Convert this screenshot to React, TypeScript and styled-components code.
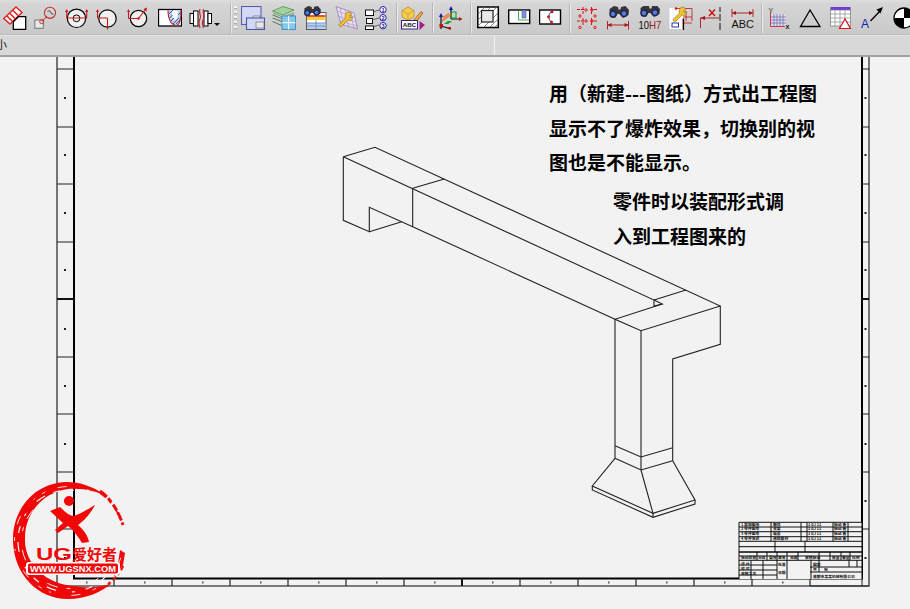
import React from 'react';
import styled, { createGlobalStyle } from 'styled-components';

const GlobalStyle = createGlobalStyle`
  html, body {
    margin: 0;
    padding: 0;
    width: 100%;
    height: 100%;
    overflow: hidden;
    background: #f2f2f2;
    font-family: "Liberation Sans", "Noto Sans CJK SC", sans-serif;
  }
`;

const Page = styled.div`
  display: flex;
  flex-direction: column;
  width: 910px;
  height: 609px;
  overflow: hidden;
`;

const Toolbar = styled.div`
  display: flex;
  align-items: center;
  flex: none;
  height: 35px;
  padding: 1px 0 0 3px;
  box-sizing: border-box;
  overflow: hidden;
  background: linear-gradient(#dedede 0, #d6d6d6 10%, #c9c9c9 100%);
  border-bottom: 1px solid #bcbcbc;
`;

const ToolGroup = styled.div`
  display: flex;
  flex: none;
  align-items: center;
  gap: 7px;
`;

const Tool = styled.svg`
  display: block;
  flex: none;
  width: 24px;
  height: 24px;
  overflow: hidden;
`;

const DropArrow = styled.div`
  flex: none;
  width: 0;
  height: 0;
  margin: 13px 0 0 1px;
  border-left: 3px solid transparent;
  border-right: 3px solid transparent;
  border-top: 3px solid #111;
`;

const Separator = styled.div<{ $before: number; $after: number }>`
  flex: none;
  width: 2px;
  height: 30px;
  margin-left: ${p => p.$before}px;
  margin-right: ${p => p.$after}px;
  background: #ececec;
  border-left: 1px solid #b4b4b4;
  box-sizing: border-box;
`;

const Grip = styled.div`
  flex: none;
  width: 3px;
  height: 24px;
  margin: 0 4px 0 2px;
  background: repeating-linear-gradient(#f4f4f4 0 2px, #a8a8a8 2px 3px, transparent 3px 5px);
`;

const StatusRow = styled.div`
  display: flex;
  flex: none;
  height: 22px;
  box-sizing: border-box;
  overflow: hidden;
  background: #d8d8d8;
  border-top: 1px solid #e4e4e4;
  border-bottom: 2px solid #a2a2a2;
`;

const StatusCell = styled.div`
  flex: none;
  width: 495px;
  box-sizing: border-box;
  overflow: hidden;
  border-right: 1px solid #f0f0f0;
  font-size: 11px;
  line-height: 16px;
  color: #111;
`;

const ClippedLabel = styled.span`
  display: block;
  margin-left: -4px;
  font-family: "Noto Sans CJK SC", sans-serif;
`;

const Canvas = styled.div`
  position: relative;
  flex: 1;
  background: #f2f2f2;
  overflow: hidden;
`;

const Sheet = styled.svg`
  display: block;
  width: 910px;
  height: 552px;
`;

const Note = styled.div<{ $left: number; $top: number }>`
  position: absolute;
  left: ${p => p.$left}px;
  top: ${p => p.$top}px;
  font-family: "Noto Sans CJK SC", sans-serif;
  font-size: 19px;
  font-weight: 700;
  line-height: 34.5px;
  color: #000;
  white-space: nowrap;
`;

const Logo = styled.svg`
  position: absolute;
  left: 8px;
  top: 423px;
  width: 124px;
  height: 124px;
`;

const Binoculars = ({ x = 0, y = 0 }: { x?: number; y?: number }) => (
  <g transform={`translate(${x} ${y})`}>
    <path d="M1.5 3 L6 0 L10 1 L10.5 3.5 L12.5 3.5 L13 1 L17.5 0 L21 4 L20.5 9 L15 12 L11.5 8 L9.5 8 L7 12 L2 11 Z" fill="#36363c" />
    <circle cx="5" cy="8" r="3.7" fill="#1e2850" />
    <circle cx="16" cy="7.5" r="3.7" fill="#1e2850" />
    <circle cx="5" cy="8" r="2.2" fill="#5c78d8" />
    <circle cx="16" cy="7.5" r="2.2" fill="#5c78d8" />
  </g>
);

const Wrench = ({ x = 0, y = 0 }: { x?: number; y?: number }) => (
  <path
    transform={`translate(${x} ${y})`}
    d="M10 0.5 C13 -0.5 15 1 14.5 3 L12.5 3.8 L13 5.5 L15.5 5 C16 8 13 9 11 8 L5 14 C3.5 15.5 1 13.5 2.5 12 L8.5 6 C7.5 3.5 8.5 1.5 10 0.5 Z"
    fill="#f2c230"
    stroke="#8f6a10"
    strokeWidth="0.6"
  />
);

const RED = '#d01818';
const DIM = '#a81414';

const toolsA = [
  <g key="a">
    <path d="M0.8 12.5 L13 1 L19 6.5 L7 18 Z" fill="#fff" stroke="#e02020" strokeWidth="1.4" />
    <path d="M4 10 L9 15 M7 7.5 L12 12.5 M10 4.5 L15 9.5" stroke="#e02020" strokeWidth="1.6" />
    <path d="M10.3 23.3 V15.7 L15.3 10.7 H22.7 V23.3 Z" fill="#fff" stroke="#000" strokeWidth="1.3" />
  </g>,
  <g key="b">
    <rect x="0.8" y="14" width="8.5" height="8.3" fill="#e8e8e8" stroke="#777" strokeWidth="1" />
    <path d="M8 15.5 L13 10" stroke="#c03030" strokeWidth="1" />
    <circle cx="7.7" cy="15.7" r="2" fill="none" stroke="#c03030" strokeWidth="1" />
    <circle cx="16" cy="6.8" r="5.6" fill="none" stroke="#c83030" strokeWidth="1.1" />
    <path d="M13.5 6 Q15.5 3.5 16.5 6 T19.5 8" fill="none" stroke="#666" strokeWidth="1.1" />
  </g>,
  <g key="c">
    <circle cx="11.5" cy="12.3" r="9.2" fill="#f0f0f0" stroke="#000" strokeWidth="1.2" />
    <circle cx="11.5" cy="12.3" r="3.4" fill="none" stroke="#000" strokeWidth="1" />
    <path d="M1.7 12 H21.7 M1.7 12 V4 M21.7 12 V4" stroke={RED} strokeWidth="1.1" />
    <path d="M1.7 3 L0 6 H3.4 Z M21.7 3 L20 6 H23.4 Z" fill={RED} />
  </g>,
  <g key="d">
    <circle cx="11.5" cy="12.5" r="8.7" fill="#f0f0f0" stroke="#000" strokeWidth="1.2" />
    <path d="M1.5 12 H11.5 M1.5 12 V4" stroke={RED} strokeWidth="1.1" />
    <path d="M11.5 12 V23.5" stroke={RED} strokeWidth="1.1" />
    <path d="M1.5 3 L0 6 H3 Z" fill={RED} />
  </g>,
  <g key="e">
    <circle cx="11.5" cy="12.5" r="8.2" fill="#f0f0f0" stroke="#000" strokeWidth="1.2" />
    <path d="M1.5 12.5 H11.5 M1.5 12.5 V4 M11.5 12.5 L18.5 3.5" stroke={RED} strokeWidth="1.1" />
    <path d="M1.5 3 L0 6 H3 Z M20 1.5 L16.5 3 L19.5 5.5 Z" fill={RED} />
    <circle cx="11.5" cy="12.5" r="1.2" fill={RED} />
  </g>,
  <g key="f">
    <rect x="0.5" y="3.5" width="23" height="16.5" fill="#fff" stroke="#000" strokeWidth="1.3" />
    <path d="M10 4 C10 16 15 19.5 18 19.5 C21 19.5 23 14 23 4 H20 C20 10 19 14 17 14 C15 14 14 10 14 4 Z" fill="#bcd0ea" />
    <path d="M11 8 L15 4 M11.5 12 L14.5 9 M13 15 L16 12 M15 18 L21 12 M18 18 L22.5 13.5 M20 9 L23 6" stroke="#2050a8" strokeWidth="0.9" />
    <path d="M10 4 C10 16 15 19.5 18 19.5 C21 19.5 23 14 23 4" fill="none" stroke="#c02030" strokeWidth="1.1" />
  </g>,
  <g key="g">
    <rect x="1" y="7.5" width="3.5" height="10" fill="#fff" stroke="#000" strokeWidth="1" />
    <rect x="4.5" y="5" width="4.5" height="15" fill="#fff" stroke="#000" strokeWidth="1" />
    <rect x="15" y="5" width="4" height="15" fill="#fff" stroke="#000" strokeWidth="1" />
    <rect x="19" y="7.5" width="3.5" height="10" fill="#fff" stroke="#000" strokeWidth="1" />
    <path d="M11 3 C9 7 13 10 11 13 S10 19 11 22 M14.5 3 C12.5 7 16.5 10 14.5 13 S13.5 19 14.5 22" fill="none" stroke="#c02028" strokeWidth="1.1" />
  </g>
];

const toolsB = [
  <g key="h">
    <rect x="0.5" y="0.5" width="19.5" height="18" fill="#d4d8f4" stroke="#5560b0" strokeWidth="1.1" />
    <rect x="12" y="10" width="7" height="5" fill="#e8e8e8" stroke="#606060" strokeWidth="0.6" />
    <rect x="5.5" y="12" width="18" height="11.5" fill="#d4d8f4" stroke="#4a56a8" strokeWidth="1.1" />
    <rect x="15" y="16" width="8" height="6" fill="#e8e8e8" stroke="#606060" strokeWidth="0.6" />
  </g>,
  <g key="i">
    <path d="M0.5 5 L11 0.5 L22 4 L11 9 Z" fill="#9fd49f" stroke="#507a50" strokeWidth="0.7" />
    <path d="M0.5 9 L11 13 L22 9 M0.5 12 L11 16 M0.5 15.5 L11 20" fill="none" stroke="#4a6a4a" strokeWidth="0.9" />
    <path d="M1 7 L11 11 L22 7" fill="none" stroke="#70b070" strokeWidth="1.3" />
    <rect x="10" y="10" width="13.5" height="13.5" fill="#88c8ea" stroke="#3a8cc0" strokeWidth="0.9" />
    <path d="M16.7 10 V23.5 M10 16.7 H23.5" stroke="#fff" strokeWidth="1" />
  </g>,
  <g key="j">
    <rect x="3.5" y="6.5" width="19.5" height="17" fill="#fff" stroke="#5a5a5a" strokeWidth="1" />
    <rect x="4" y="11" width="18.5" height="3" fill="#f4d030" />
    <rect x="4" y="9" width="18.5" height="2" fill="#e05050" />
    <rect x="4" y="17" width="18.5" height="6" fill="#b8d0f0" />
    <path d="M4 17 H23 M4 20 H23 M13 14 V23.5" stroke="#5878b0" strokeWidth="0.7" />
    <g transform="scale(0.85)">
      <Binoculars />
    </g>
  </g>,
  <g key="k">
    <path d="M2 0.5 L20 7 L23.5 23 L7 18 Z" fill="#e6e0ee" stroke="#9878b8" strokeWidth="0.8" />
    <path d="M6 2 L10 20 M11 4 L15 21 M16 5.5 L20 22 M3 5 L21 11 M4 10 L22 16 M5.5 15 L23 20" stroke="#a88cc8" strokeWidth="0.6" />
    <Wrench x={3} y={6} />
  </g>,
  <g key="l">
    <rect x="0.5" y="4" width="8" height="5.5" fill="#fff" stroke="#111" strokeWidth="1" />
    <rect x="1.5" y="12.5" width="6" height="5" fill="#fff" stroke="#111" strokeWidth="1" />
    <rect x="0.5" y="20" width="8" height="3.5" fill="#fff" stroke="#111" strokeWidth="1" />
    <path d="M8 6 L14 4 M7 14 L14 12 M8 21 L14 19" stroke="#444" strokeWidth="0.8" />
    <circle cx="18" cy="3.7" r="3.2" fill="#fff" stroke="#2020a0" strokeWidth="1" />
    <circle cx="18" cy="11.7" r="3.2" fill="#fff" stroke="#2020a0" strokeWidth="1" />
    <circle cx="18" cy="19.7" r="3.2" fill="#fff" stroke="#2020a0" strokeWidth="1" />
    <text x="18" y="5.7" fontSize="5.5" fontWeight="700" textAnchor="middle" fill="#2020a0">1</text>
    <text x="18" y="13.7" fontSize="5.5" fontWeight="700" textAnchor="middle" fill="#2020a0">2</text>
    <text x="18" y="21.7" fontSize="5.5" fontWeight="700" textAnchor="middle" fill="#2020a0">3</text>
  </g>
];

const toolCube = (
  <g>
    <path d="M1 4.5 L7 1 L13 4.5 V11 L7 14 L1 11 Z" fill="#f6cc50" stroke="#b88a18" strokeWidth="0.7" />
    <path d="M1 4.5 L7 8 L13 4.5 M7 8 V14" fill="none" stroke="#c89a28" strokeWidth="0.7" />
    <path d="M13 14 L20 5.5 L22 7 L15.5 15.5 Z" fill="#f0b030" stroke="#8a3010" strokeWidth="0.6" />
    <rect x="0.5" y="14.5" width="16" height="8.5" fill="#fff" stroke="#302090" strokeWidth="1" />
    <text x="8.5" y="21" fontSize="6.2" fontWeight="700" textAnchor="middle" fill="#111">ABC</text>
    <path d="M18.5 15 L24 19 L18.5 24 Z" fill="#a81890" />
  </g>
);

const toolAxes = (
  <g>
    <path d="M12 13 V2 M12 13 H22" stroke="#111" strokeWidth="1.2" />
    <path d="M12 0 L10 4 H14 Z" fill="#1010c0" />
    <path d="M23.5 13 L20 11 V15 Z" fill="#c01010" />
    <rect x="12" y="6" width="5" height="6" fill="none" stroke="#10a030" strokeWidth="1.1" />
    <path d="M2 23 V9 M2 20 L12 23" stroke="#111" strokeWidth="1.2" />
    <path d="M2 7 L0 11 H4 Z" fill="#1010c0" />
    <rect x="0.5" y="18" width="3.5" height="3.5" fill="#c01010" />
    <path d="M11 24 L7.5 21 L12 21 Z" fill="#c01010" />
    <path d="M5 18 L9 15 H13 L9 18 Z" fill="#10a030" />
    <path d="M3 15 L12 8.5 M4 12 L10 7.5" stroke="#f07020" strokeWidth="1.4" />
  </g>
);

const toolsC = [
  <g key="m">
    <rect x="0.8" y="1" width="20.5" height="20.5" fill="#fff" stroke="#000" strokeWidth="1.5" />
    <path d="M1 8 L8 1 M1 14 L14 1 M1 20 L20 1 M7 21 L21 7 M13 21 L21 13 M18 21 L21 18" stroke="#666" strokeWidth="0.8" />
    <rect x="4.5" y="4.5" width="11.5" height="11.5" fill="#e8e8e8" stroke="#222" strokeWidth="1.2" />
  </g>,
  <g key="n">
    <rect x="0.7" y="4" width="21" height="13.5" fill="#fff" stroke="#000" strokeWidth="1.4" />
    <path d="M10.5 4.5 V14 H21" fill="none" stroke="#40b040" strokeWidth="1" />
    <rect x="14" y="4.5" width="4" height="7.5" fill="#8090d8" stroke="#5060a8" strokeWidth="0.6" />
  </g>,
  <g key="o">
    <rect x="0.5" y="4" width="21" height="14" fill="#fff" stroke="#000" strokeWidth="1.4" />
    <path d="M14 4.5 C8.5 7 8.5 14.5 14 17.5" fill="none" stroke="#3050c0" strokeWidth="1" />
    <circle cx="13" cy="5.7" r="1.5" fill={RED} />
    <circle cx="9.5" cy="10.8" r="1.5" fill={RED} />
    <circle cx="12.5" cy="16" r="1.5" fill={RED} />
  </g>
];

const toolsD = [
  <g key="p">
    <path d="M1 3.5 H9 M7 1 V9 M14 3.5 H22 M15.5 1 V9 M1 15 H9 M7 12 V20 M14 15 H22 M15.5 12 V20" stroke="#d01010" strokeWidth="1" strokeDasharray="3 1" />
    {[[4, 10], [10, 4], [19, 10], [10, 15], [4, 21.5], [19, 21.5], [16, 4], [16, 15]].map(([cx, cy]) => (
      <circle key={`${cx}-${cy}`} cx={cx} cy={cy} r="1.2" fill="none" stroke="#e81818" strokeWidth="1" />
    ))}
  </g>,
  <g key="q">
    <Binoculars x={1} y={0} />
    <path d="M0.5 19 H21.5 M0.5 15 V23.5 M21.5 15 V23.5" stroke={DIM} strokeWidth="0.9" />
    <path d="M0.5 19 L4.5 17 V21 Z M21.5 19 L17.5 17 V21 Z" fill={DIM} />
  </g>,
  <g key="r">
    <Binoculars x={1} y={-1} />
    <text x="0.5" y="23" fontSize="11.5" fill="#111" textLength="10.5" lengthAdjust="spacingAndGlyphs">10</text>
    <text x="11" y="23" fontSize="11.5" fill="#a01818" textLength="12.5" lengthAdjust="spacingAndGlyphs">H7</text>
  </g>,
  <g key="s">
    <rect x="0.5" y="2" width="14" height="21" fill="#fff" />
    <path d="M6 2.5 H23 V15 M14 23 V12 M14 17 H23 M17 5 V15 M14 11 H23" fill="none" stroke="#c01818" strokeWidth="0.8" />
    <circle cx="7" cy="2.5" r="1.3" fill="#e01010" />
    <Wrench x={2} y={1} />
    <path d="M14.5 13 V24" stroke="#000" strokeWidth="1.2" />
    <rect x="3" y="17" width="6.5" height="4" fill="#fff" stroke="#1020a0" strokeWidth="0.9" />
  </g>,
  <g key="t">
    <path d="M0.5 12 V22 M0.5 12 H19" stroke={DIM} strokeWidth="0.9" />
    <path d="M0.5 12 L5 10 V14 Z" fill={DIM} />
    <path d="M20 1 V6 M20 8 V15 M20 17 V24" stroke="#111" strokeWidth="1" />
    <path d="M9 3.5 L15 10 M15 3.5 L9 10" stroke="#c01010" strokeWidth="1.4" />
  </g>,
  <g key="u">
    <path d="M1 7 H22 M1 3 V11 M22 3 V11" stroke={DIM} strokeWidth="0.9" />
    <path d="M1 7 L5 5 V9 Z M22 7 L18 5 V9 Z" fill={DIM} />
    <text x="0.5" y="22" fontSize="11" textLength="22.5" lengthAdjust="spacingAndGlyphs" fill="#111">ABC</text>
  </g>
];

const toolsE = [
  <g key="v">
    <text x="0.5" y="6.5" fontSize="7" fill="#333">Y</text>
    <rect x="3" y="8" width="15" height="12" fill="#dcdcec" />
    <path d="M3 11 H18 M3 14 H18 M3 17 H18 M6 8 V20 M9 8 V20 M12 8 V20 M15 8 V20" stroke="#6868a0" strokeWidth="0.7" />
    <path d="M2.5 6 V20.5 H17" fill="none" stroke="#d03048" strokeWidth="1" />
    <text x="17.5" y="22.5" fontSize="7" fontWeight="700" fill="#222">x</text>
  </g>,
  <path key="w" d="M11 4 L1.5 20.5 H21 Z" fill="none" stroke="#000" strokeWidth="1.3" />,
  <g key="x">
    <rect x="0.5" y="1" width="20" height="3" fill="#7038d8" />
    <rect x="0.5" y="4" width="20" height="16" fill="#fff" stroke="#777" strokeWidth="0.7" />
    <path d="M0.5 8 H20.5 M0.5 12 H20.5 M0.5 16 H20.5 M5 4 V20 M10 4 V20 M15 4 V20" stroke="#8a8a8a" strokeWidth="0.7" />
    <path d="M15 13 L9.5 22.5 H20.5 Z" fill="#fff" stroke="#d01020" strokeWidth="1.2" />
  </g>,
  <g key="y">
    <text x="0" y="21.5" fontSize="12" fill="#1420b0">A</text>
    <path d="M9.5 15 L19 5" stroke="#000" strokeWidth="1.3" />
    <path d="M22 1 L15.5 3.5 L19.5 7.5 Z" fill="#000" />
  </g>,
  <g key="z">
    <circle cx="12" cy="12" r="10" fill="#fff" stroke="#000" strokeWidth="1.3" />
    <path d="M12 2 A10 10 0 0 1 22 12 H12 Z M12 22 A10 10 0 0 1 2 12 H12 Z" fill="#000" />
  </g>
];

const renderTools = (tools: React.ReactNode[]) =>
  tools.map((t, i) => (
    <Tool key={i} viewBox="0 0 24 24">
      {t}
    </Tool>
  ));

// ruler ticks repeat every 57.7px down the sheet and 58px along it
const rulerRows = [69, 127, 184, 242, 299, 357, 414, 472, 529];
const rulerDots = [97, 154, 212, 269, 328, 385, 443, 500, 557];
const rulerCols = [114, 172, 230, 288, 346, 404, 462, 520, 578, 636, 694, 752, 810];

// model outline in screen coordinates
const modelLines = [
  'M343.3 156.7 L375 147.3 L720.3 306 V344.3 L672.7 359 V460.7',
  'M343.3 156.7 L654 300 V306 L662.3 304 L654 300',
  'M654 300 L686 290',
  'M412.7 188.3 L444.3 179',
  'M412.7 188.3 V226.7',
  'M343.3 156.7 V220.3 L369.3 231.7 V207.3 L412.7 226.7 L615 319.3',
  'M369.3 231.7 L401.7 221.7',
  'M662.3 304 L615 319.3 L641 330.7 L720.3 306',
  'M615 319.3 V458.3',
  'M641 330.7 V470',
  'M615 445.7 L641 457 L672.7 447.7',
  'M615 458.3 L641 470 L672.7 460.7',
  'M615 458.3 L592.3 486 L653 513.3 L695 500 L672.7 460.7',
  'M641 470 L653 513.3',
  'M592.3 486 V490 L653 517.3 L695 504 V500',
  'M653 513.3 V517.3'
];

const blockH = [
  [739, 862, 522.3], [739, 862, 527], [739, 862, 531.7], [739, 862, 536.7], [739, 862, 541.3],
  [739, 862, 552], [739, 862, 556], [739, 862, 560.3], [739, 777, 565], [739, 777, 570], [739, 777, 575],
  [810, 862, 567], [810, 862, 572]
];
const blockV = [
  [739, 522.3, 579], [771, 522.3, 541.3], [801, 522.3, 541.3], [807, 522.3, 541.3], [833, 522.3, 541.3],
  [848, 522.3, 541.3], [775, 541.3, 552], [805, 541.3, 552], [757, 552, 560.3], [767, 552, 560.3],
  [777, 552, 579], [787, 552, 560.3], [798, 552, 560.3], [819, 552, 560.3], [830, 552, 560.3],
  [841, 552, 560.3], [850, 552, 560.3], [751, 560.3, 579], [763, 560.3, 579], [787, 560.3, 579],
  [811, 560.3, 579], [819, 560.3, 572], [849, 560.3, 567], [857, 560.3, 567], [862, 522.3, 579]
];
const blockLabels = [
  [741, 525.8, '1 装配图纸'], [741, 530.4, '2 零件图号'], [741, 535.2, '3 零件图号'], [741, 540, '4 零件名称'],
  [773, 525.8, '箱体'], [773, 530.4, '支架'], [773, 535.2, '端盖'], [773, 540, '连接板材'],
  [808, 525.8, '1 GJ 11'], [808, 530.4, '1 GJ 11'], [808, 535.2, '1 GJ 11'], [808, 540, '1 GJ 11'],
  [834, 525.8, '标记 备'], [834, 530.4, '标记 备'], [834, 535.2, '标记 备'], [834, 540, '标记 备'],
  [741, 559, '标记处数'], [758, 559, '分区'], [769, 559, '更改'], [778, 559, '签名'], [790, 559, '日期'],
  [805, 559, '审核标记'], [832, 559, '数量'], [842, 559, '重量'], [852, 559, '比例'],
  [741, 564.5, '设 计'], [741, 569.5, '校 对'], [741, 574.8, '审核工艺'], [778, 566, '批准'], [778, 574, '日期'],
  [813, 565.5, '图样'], [813, 570.8, '共'], [824, 570.8, '张'], [813, 577.5, '成都市某某机械有限公司']
];

export default function App() {
  return (
    <>
      <GlobalStyle />
      <Page>
        <Toolbar>
          <ToolGroup>{renderTools(toolsA)}</ToolGroup>
          <DropArrow />
          <Separator $before={10} $after={0} />
          <Grip />
          <ToolGroup>{renderTools(toolsB)}</ToolGroup>
          <Separator $before={7} $after={3} />
          <ToolGroup>{renderTools([toolCube])}</ToolGroup>
          <Separator $before={7} $after={5} />
          <ToolGroup>{renderTools([toolAxes])}</ToolGroup>
          <Separator $before={7} $after={5} />
          <ToolGroup>{renderTools(toolsC)}</ToolGroup>
          <Separator $before={6} $after={5} />
          <ToolGroup>{renderTools(toolsD)}</ToolGroup>
          <Separator $before={6} $after={5} />
          <ToolGroup>{renderTools(toolsE)}</ToolGroup>
        </Toolbar>
        <StatusRow>
          <StatusCell>
            <ClippedLabel>小</ClippedLabel>
          </StatusCell>
        </StatusRow>
        <Canvas>
          <Sheet viewBox="0 57 910 552">
            <g fill="none">
              <path d="M57 56 V586 H869 V56" stroke="#555" strokeWidth="1.6" />
              <path d="M74 56 V578.5 H862 V56" stroke="#000" strokeWidth="2" />
              <path d="M57 299 H74 M862 299 H869" stroke="#000" strokeWidth="2" />
              <path d="M462 578 V586" stroke="#000" strokeWidth="2" />
              {rulerRows.map(y => (
                <path key={y} d={`M57 ${y} H74 M862 ${y} H869`} stroke="#222" strokeWidth="1.2" />
              ))}
              {rulerCols.map(x => (
                <path key={x} d={`M${x} 578 V586`} stroke="#222" strokeWidth="1.2" />
              ))}
              <path d="M810 586 H869 M862 578 V586" stroke="#222" strokeWidth="1" />
            </g>
            {rulerDots.map(y => (
              <g key={y} fill="#222">
                <rect x="64" y={y} width="2" height="2" />
                <rect x="864.5" y={y} width="2" height="2" />
              </g>
            ))}
            {rulerCols.map(x => (
              <rect key={x} x={x - 28} y="581.5" width="1.5" height="2" fill="#555" />
            ))}

            <g fill="none" stroke="#222" strokeWidth="1.1">
              {modelLines.map(d => (
                <path key={d} d={d} />
              ))}
            </g>

            <rect x="739" y="522.3" width="123" height="56.7" fill="#f2f2f2" />
            <g stroke="#111" strokeWidth="1">
              {blockH.map(([x1, x2, y]) => (
                <line key={`${x1}-${y}`} x1={x1} x2={x2} y1={y} y2={y} />
              ))}
              {blockV.map(([x, y1, y2]) => (
                <line key={`${x}-${y1}`} x1={x} x2={x} y1={y1} y2={y2} />
              ))}
            </g>
            <path d="M739 546.7 H862 M739 552 H862" stroke="#000" strokeWidth="1" />
            <g fontFamily="'Noto Sans CJK SC', sans-serif" fontSize="3.8" fontWeight="700" fill="#111">
              {blockLabels.map(([x, y, label]) => (
                <text key={`${x}-${y}`} x={x} y={y}>
                  {label}
                </text>
              ))}
            </g>
          </Sheet>

          <Note $left={549} $top={19}>
            用（新建---图纸）方式出工程图
            <br />
            显示不了爆炸效果，切换别的视
            <br />
            图也是不能显示。
          </Note>
          <Note $left={613} $top={127}>
            零件时以装配形式调
            <br />
            入到工程图来的
          </Note>

          <Logo viewBox="0 0 124 124">
            <g fill="#f00808">
              <path d="M100 17 C85 6 72 2 58 2 C26 3 4 30 5 61 C6 95 30 119 60 119 C78 119 94 112 104 103 C92 108 80 108 66 106 C38 104 16 84 17 58 C17 32 36 12 60 9 C76 8 88 11 100 17 Z" />
              <path d="M112 70 L117 73 L115 85 L106 97 L110 84 Z" />
              <circle cx="61" cy="21" r="5" />
              <path d="M42 31 L52 27 C58 33 62 36 66 36 C74 33 82 28 87 25 C83 33 76 41 70 45 C76 50 80 56 81 62 L74 63 C70 56 65 50 60 46 L50 53 L47 50 L55 43 Z" />
            </g>
            <g fill="none" stroke="#f00808">
              <path d="M92 11 C102 18 110 30 115 45" strokeWidth="3" strokeDasharray="9 2 5 3 7 2" />
              <path d="M84 9 C96 14 106 24 111 36" strokeWidth="1.5" strokeDasharray="4 5 7 4" />
              <path d="M100 104 C108 98 113 92 116 84" strokeWidth="2" strokeDasharray="3 3 5 2" />
            </g>
            <g fill="none" stroke="#f2f2f2">
              <circle cx="61" cy="61" r="51" strokeWidth="1.2" strokeDasharray="7 11 3 16 10 9" />
              <circle cx="61" cy="61" r="54.5" strokeWidth="0.9" strokeDasharray="4 13 9 21 2 8" />
              <circle cx="61" cy="61" r="47.5" strokeWidth="1" strokeDasharray="11 19 4 9" />
            </g>
            <text x="28" y="80" fontSize="17" fontWeight="700" fill="#f00808" textLength="36" lengthAdjust="spacingAndGlyphs">UG</text>
            <text x="64" y="79.5" fontFamily="'Noto Sans CJK SC', sans-serif" fontSize="15" fontWeight="700" fill="#f00808">爱好者</text>
            <rect x="18" y="82" width="94" height="13" rx="3" fill="#fff" />
            <rect x="20" y="83.5" width="90" height="10" rx="2" fill="#f00808" />
            <text x="65" y="91.8" fontSize="9.4" fontWeight="700" textAnchor="middle" fill="#fff" textLength="86" lengthAdjust="spacingAndGlyphs">
              WWW.UGSNX.COM
            </text>
          </Logo>
        </Canvas>
      </Page>
    </>
  );
}
